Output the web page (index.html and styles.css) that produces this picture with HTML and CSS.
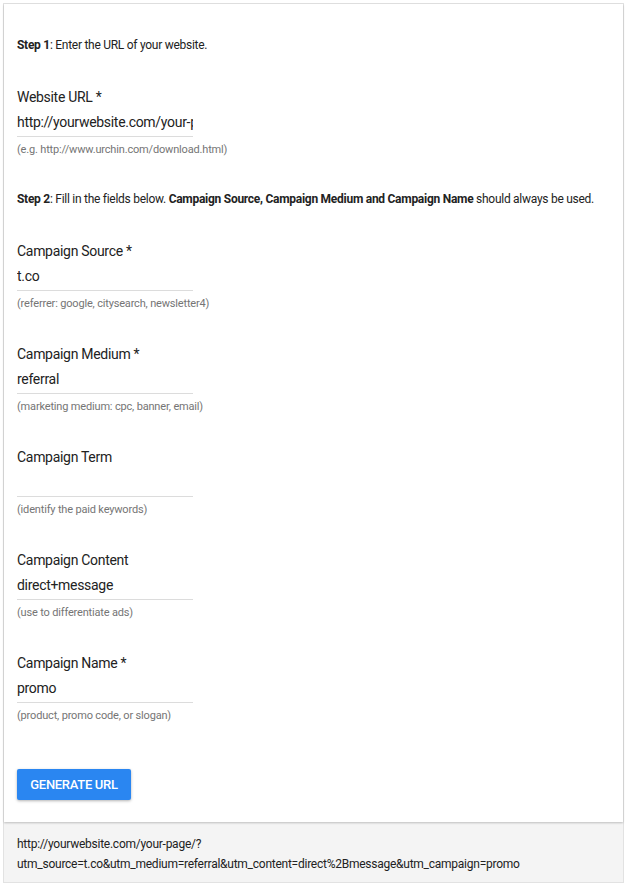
FILE: index.html
```html
<!DOCTYPE html>
<html lang="en">
<head>
  <meta charset="UTF-8">
  <meta name="viewport" content="width=device-width, initial-scale=1.0">
  <title>Campaign URL Builder</title>
  <link rel="stylesheet" href="styles.css">
</head>
<body>
  <div class="builder">
    <div class="builder-form">
      <p class="step"><b>Step 1</b>: Enter the URL of your website.</p>

      <div class="field">
        <label for="url">Website URL *</label>
        <input type="text" id="url" value="http://yourwebsite.com/your-page/">
        <div class="hint">(e.g. http://www.urchin.com/download.html)</div>
      </div>

      <p class="step"><b>Step 2</b>: Fill in the fields below. <b>Campaign Source, Campaign Medium and Campaign Name</b> should always be used.</p>

      <div class="field">
        <label for="source">Campaign Source *</label>
        <input type="text" id="source" value="t.co">
        <div class="hint">(referrer: google, citysearch, newsletter4)</div>
      </div>

      <div class="field">
        <label for="medium">Campaign Medium *</label>
        <input type="text" id="medium" value="referral">
        <div class="hint">(marketing medium: cpc, banner, email)</div>
      </div>

      <div class="field">
        <label for="term">Campaign Term</label>
        <input type="text" id="term" value="">
        <div class="hint">(identify the paid keywords)</div>
      </div>

      <div class="field">
        <label for="content">Campaign Content</label>
        <input type="text" id="content" value="direct+message">
        <div class="hint">(use to differentiate ads)</div>
      </div>

      <div class="field">
        <label for="name">Campaign Name *</label>
        <input type="text" id="name" value="promo">
        <div class="hint">(product, promo code, or slogan)</div>
      </div>

      <button class="generate">GENERATE URL</button>
    </div>

    <!-- Ergebnis -->
    <div class="result">http://yourwebsite.com/your-page/?<br>utm_source=t.co&amp;utm_medium=referral&amp;utm_content=direct%2Bmessage&amp;utm_campaign=promo</div>
  </div>
</body>
</html>
```

FILE: styles.css
```css
* {
  margin: 0;
  padding: 0;
  box-sizing: border-box;
}

body {
  font-family: Roboto, "Liberation Sans", Arial, sans-serif;
  background-color: #fff;
  color: #222;
}

.builder {
  margin: 3px 0 0 3px;
  width: 621px;
  border: 1px solid #e2e2e2;
  background-color: #f4f4f4;
}

.builder-form {
  background-color: #fff;
  padding: 32px 13px 22px;
  box-shadow: 0 1px 2px rgba(0, 0, 0, 0.22);
  position: relative;
}

.step {
  margin: 32px 0 33px;
  font-size: 12px;
  line-height: 18px;
  letter-spacing: -0.27px;
  white-space: nowrap;
  color: #222;
}

.step:first-child {
  margin-top: 0;
}

.step b {
  font-weight: 700;
}

.field {
  margin: 32px 0;
}

.field label {
  display: block;
  font-size: 14px;
  line-height: 20px;
  letter-spacing: -0.3px;
  color: #222;
}

.field input {
  display: block;
  width: 176px;
  height: 30px;
  border: none;
  border-bottom: 1px solid #dcdcdc;
  font-family: inherit;
  font-size: 14px;
  letter-spacing: -0.3px;
  color: #222;
  background: transparent;
  outline: none;
}

.hint {
  margin-top: 5px;
  font-size: 11px;
  line-height: 16px;
  letter-spacing: -0.17px;
  color: #757575;
}

.generate {
  margin-top: 13px;
  width: 114px;
  height: 31px;
  background-color: #2a86f1;
  color: #fff;
  border: none;
  border-radius: 2px;
  font-family: inherit;
  font-size: 13px;
  font-weight: 500;
  letter-spacing: -0.3px;
  box-shadow: 0 1px 3px rgba(0, 0, 0, 0.3);
  cursor: pointer;
}

.result {
  padding: 12px 13px 8px;
  font-size: 12px;
  line-height: 20px;
  letter-spacing: -0.25px;
  color: #222;
}
```
